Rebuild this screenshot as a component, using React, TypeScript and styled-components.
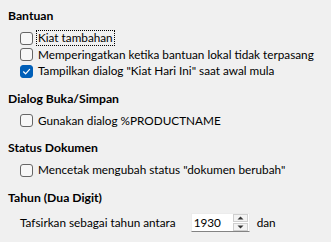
import styled, { createGlobalStyle } from "styled-components";

const GlobalStyle = createGlobalStyle`
  html, body {
    margin: 0;
    padding: 0;
    background: #f0f0f0;
  }
  body {
    font-family: "Lato", "Noto Sans", sans-serif;
    font-size: 11.75px;
    color: #000;
  }
`;

const Page = styled.div`
  width: 331px;
  height: 242px;
  box-sizing: border-box;
  padding: 8px 0 0 8px;
  display: flex;
  flex-direction: column;
  gap: 11px;
  overflow: hidden;
`;

const Section = styled.section`
  display: flex;
  flex-direction: column;
`;

const Heading = styled.div`
  font-weight: bold;
  font-size: 12.2px;
  height: 16px;
  line-height: 16px;
  margin-bottom: 6px;
`;

const Items = styled.div`
  display: flex;
  flex-direction: column;
  padding-left: 12px;
`;

const Row = styled.label`
  display: flex;
  align-items: center;
  height: 16.5px;
  gap: 5px;
`;

const Box = styled.span<{ $checked?: boolean }>`
  width: 13px;
  height: 13px;
  box-sizing: border-box;
  border-radius: 3px;
  flex: none;
  display: flex;
  align-items: center;
  justify-content: center;
  border: 1px solid ${(p) => (p.$checked ? "#005fb8" : "#666")};
  background: ${(p) => (p.$checked ? "#005fb8" : "#f7f7f7")};
`;

const Caption = styled.span<{ $focused?: boolean }>`
  line-height: 14px;
  padding: 0 1px;
  margin-left: -2px;
  border: 1px dotted ${(p) => (p.$focused ? "#000" : "transparent")};
`;

const SpinRow = styled.div`
  display: flex;
  align-items: center;
  padding-left: 12px;
  height: 21px;
`;

const SpinLabel = styled.span`
  margin-right: 15px;
`;

const Spin = styled.div`
  width: 59px;
  height: 19px;
  box-sizing: border-box;
  display: flex;
  align-items: center;
  background: #fff;
  border: 1px solid #ececec;
  border-bottom-color: #838383;
  padding: 0 1px 0 2px;
`;

const SpinValue = styled.span`
  flex: 1;
`;

const SpinButtons = styled.div`
  display: flex;
  flex-direction: column;
  gap: 1px;
  width: 15px;
`;

const SpinButton = styled.div`
  height: 8px;
  box-sizing: border-box;
  background: #f3f3f3;
  border: 1px solid #cfcfcf;
  display: flex;
  align-items: center;
  justify-content: center;
`;

const After = styled.span`
  margin-left: 7px;
`;

const Check = () => (
  <svg width="9" height="9" viewBox="0 0 9 9">
    <path d="M1.5 4.8 L3.6 6.8 L7.6 2.4" fill="none" stroke="#fff" strokeWidth="1.2" strokeLinecap="round" strokeLinejoin="round" />
  </svg>
);

const Arrow = ({ up }: { up?: boolean }) => (
  <svg width="7" height="4" viewBox="0 0 7 4">
    <path d={up ? "M0.5 3.5 L3.5 0.5 L6.5 3.5 Z" : "M0.5 0.5 L3.5 3.5 L6.5 0.5 Z"} fill="#333" />
  </svg>
);

const CheckItem = ({ text, checked, focused }: { text: string; checked?: boolean; focused?: boolean }) => (
  <Row>
    <Box $checked={checked}>{checked && <Check />}</Box>
    <Caption $focused={focused}>{text}</Caption>
  </Row>
);

export default function App() {
  return (
    <>
      <GlobalStyle />
      <Page>
        <Section>
          <Heading>Bantuan</Heading>
          <Items>
            <CheckItem text="Kiat tambahan" focused />
            <CheckItem text="Memperingatkan ketika bantuan lokal tidak terpasang" />
            <CheckItem text={'Tampilkan dialog "Kiat Hari Ini" saat awal mula'} checked />
          </Items>
        </Section>
        <Section>
          <Heading>Dialog Buka/Simpan</Heading>
          <Items>
            <CheckItem text="Gunakan dialog %PRODUCTNAME" />
          </Items>
        </Section>
        <Section>
          <Heading>Status Dokumen</Heading>
          <Items>
            <CheckItem text={'Mencetak mengubah status "dokumen berubah"'} />
          </Items>
        </Section>
        <Section>
          <Heading>Tahun (Dua Digit)</Heading>
          <SpinRow>
            <SpinLabel>Tafsirkan sebagai tahun antara</SpinLabel>
            <Spin>
              <SpinValue>1930</SpinValue>
              <SpinButtons>
                <SpinButton><Arrow up /></SpinButton>
                <SpinButton><Arrow /></SpinButton>
              </SpinButtons>
            </Spin>
            <After>dan</After>
          </SpinRow>
        </Section>
      </Page>
    </>
  );
}
